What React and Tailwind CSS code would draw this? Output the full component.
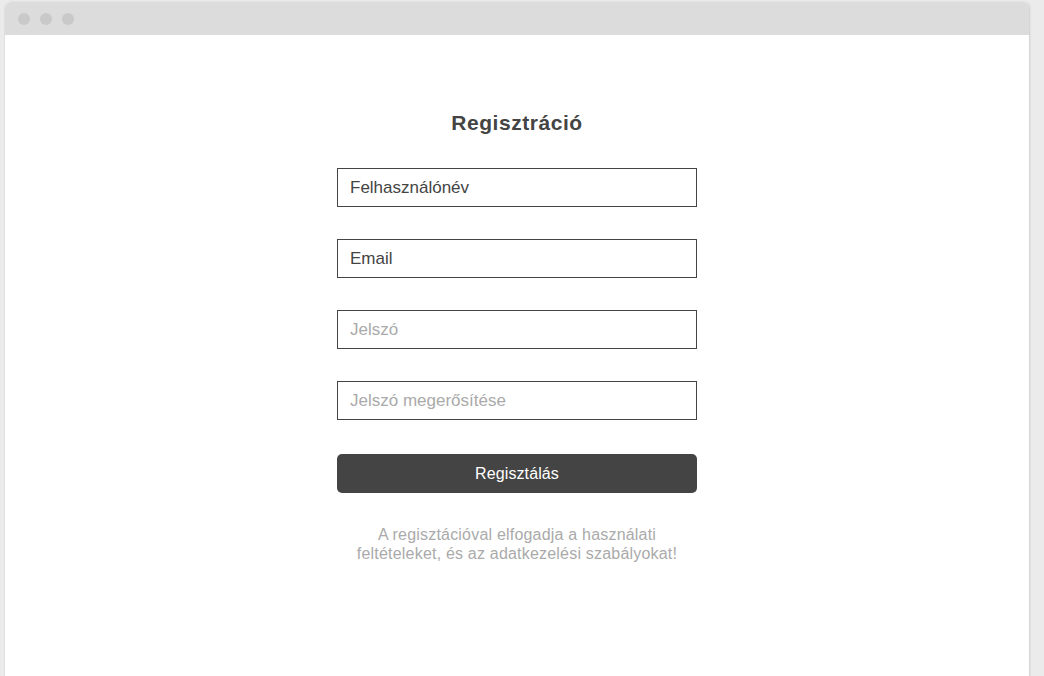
export default function App() {
  return (
    <div className="min-h-screen bg-[#ebebeb] pt-[2px] pl-[4px] overflow-hidden" style={{ fontFamily: '"Liberation Sans", Arial, sans-serif' }}>
      <div className="w-[1025px] h-[700px] bg-white rounded-t-[6px] shadow-[1px_0_2px_rgba(0,0,0,0.12)] border-l border-[#e0e0e0] flex flex-col">
        {/* title bar */}
        <div className="h-[33px] bg-[#dcdcdc] rounded-t-[6px] flex items-center gap-[10px] pl-[13px] shrink-0">
          <span className="w-[12px] h-[12px] rounded-full bg-[#c9c9c9]" />
          <span className="w-[12px] h-[12px] rounded-full bg-[#c9c9c9]" />
          <span className="w-[12px] h-[12px] rounded-full bg-[#c9c9c9]" />
        </div>

        {/* form */}
        <div className="flex flex-col items-center pt-[74px]">
          <h1 className="text-[21px] leading-[28px] font-bold text-[#444] tracking-[0.55px]">Regisztráció</h1>

          <div className="mt-[31px] w-[360px] flex flex-col gap-[32px]">
            <input readOnly value="Felhasználónév" className="h-[39px] w-full border border-[#444] px-[12px] text-[17px] text-[#444] outline-none" />
            <input readOnly value="Email" className="h-[39px] w-full border border-[#444] px-[12px] text-[17px] text-[#444] outline-none" />
            <input readOnly placeholder="Jelszó" className="h-[39px] w-full border border-[#444] px-[12px] text-[17px] text-[#444] placeholder:text-[#aaa] outline-none" />
            <input readOnly placeholder="Jelszó megerősítése" className="h-[39px] w-full border border-[#444] px-[12px] text-[17px] text-[#444] placeholder:text-[#aaa] outline-none" />
          </div>

          <button className="mt-[34px] w-[360px] h-[39px] rounded-[5px] bg-[#444] text-white text-[16px] tracking-[0.1px]">
            Regisztálás
          </button>

          <p className="mt-[32px] text-center text-[16px] leading-[19px] text-[#aaa] tracking-[0.2px]">
            A regisztációval elfogadja a használati
            <br />
            feltételeket, és az adatkezelési szabályokat!
          </p>
        </div>
      </div>
    </div>
  );
}
